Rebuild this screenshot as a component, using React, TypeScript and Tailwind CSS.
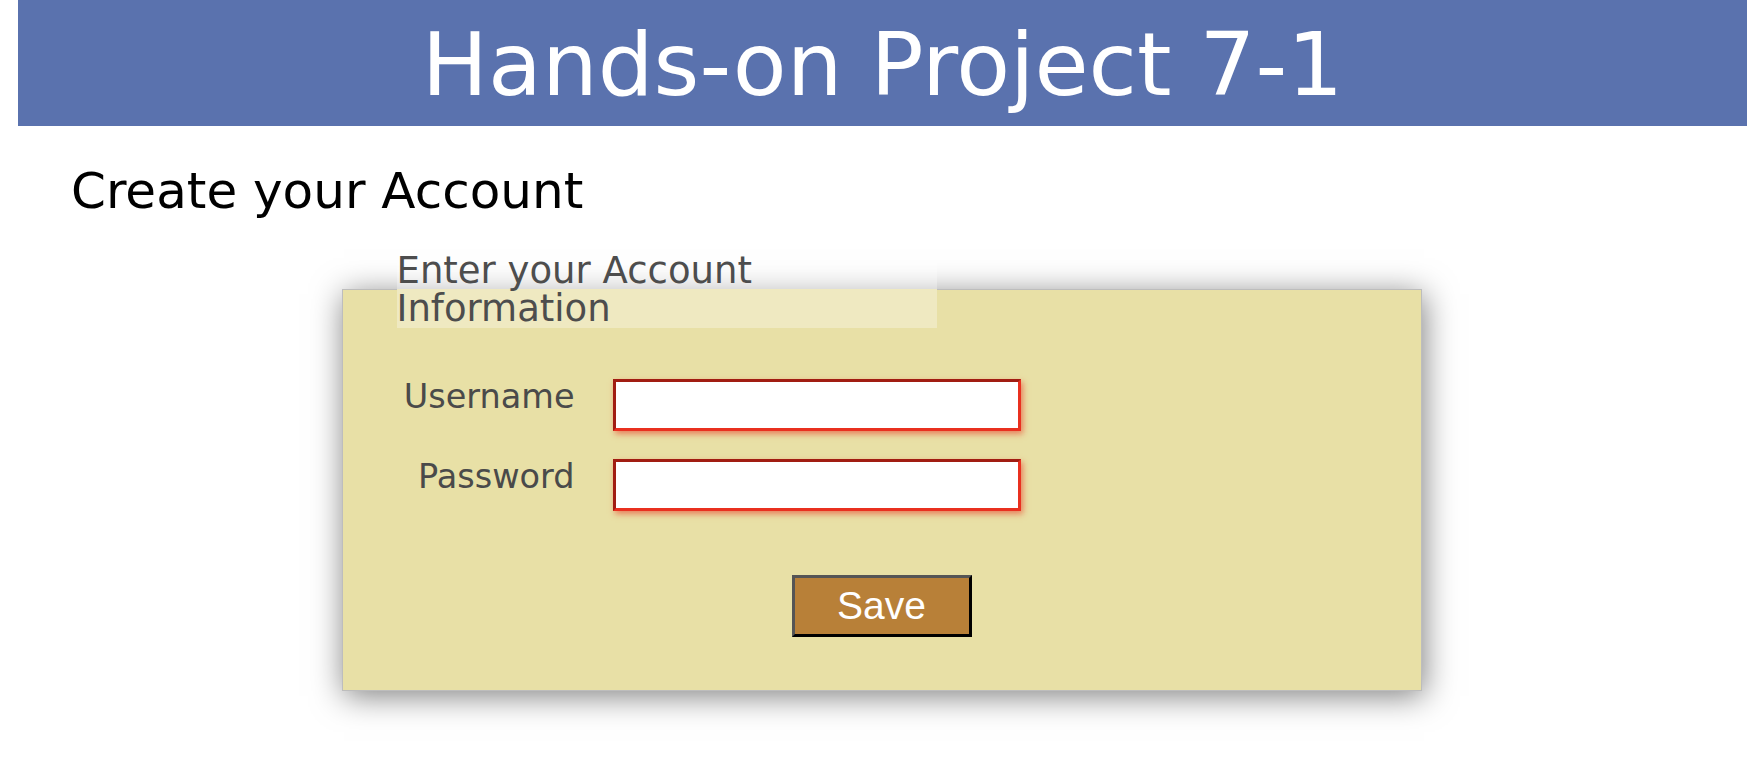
import React from 'react';

const inputClass =
  "h-[52px] w-[408px] border-[3px] border-t-[#a11d12] border-l-[#a11d12] border-r-[#e9301f] border-b-[#e9301f] bg-white px-2 text-[20px] outline-none shadow-[2px_3px_6px_rgba(233,48,31,0.55)]";

const labelClass =
  "-mt-[2px] self-start text-right text-[33.5px] leading-[40px] text-[#4a4a4a]";

export default function App() {
  return (
    <div className="min-h-screen bg-white font-['DejaVu_Sans',Verdana,sans-serif]">
      <header className="ml-[18px] mr-[16px] h-[126px] bg-[#5a72ae] pt-[14px] text-center">
        <h1 className="text-[88px] leading-[102px] text-white">Hands-on Project 7-1</h1>
      </header>

      <h2 className="mt-[36px] pl-[71px] text-[50px] leading-[58px] text-black">Create your Account</h2>

      <form onSubmit={(e) => e.preventDefault()}>
        <fieldset className="mx-auto mt-[30px] w-[1080px] border border-[#bdbdbd] bg-[#e8e0a6] pb-[53px] shadow-[2px_5px_30px_rgba(0,0,0,0.5)]">
          <legend className="-mb-[8px] ml-[54px] w-[540px] bg-white/30 pt-[2px] text-[37px] leading-[38px] text-[#4d4d4d]">
            Enter your Account Information
          </legend>

          <div className="mt-[59px] grid grid-cols-[232px_408px] gap-x-[38px] gap-y-[28px]">
            <label htmlFor="username" className={labelClass}>
              Username
            </label>
            <input id="username" type="text" className={inputClass} />

            <label htmlFor="password" className={labelClass}>
              Password
            </label>
            <input id="password" type="password" className={inputClass} />
          </div>

          <div className="mt-[64px] flex justify-center">
            <button
              type="submit"
              className="flex h-[62px] w-[180px] items-center justify-center border-[3px] border-t-[#555555] border-l-[#555555] border-r-black border-b-black bg-[#b88038] font-['Liberation_Sans',Arial,sans-serif] text-[39px] text-white"
            >
              Save
            </button>
          </div>
        </fieldset>
      </form>
    </div>
  );
}
